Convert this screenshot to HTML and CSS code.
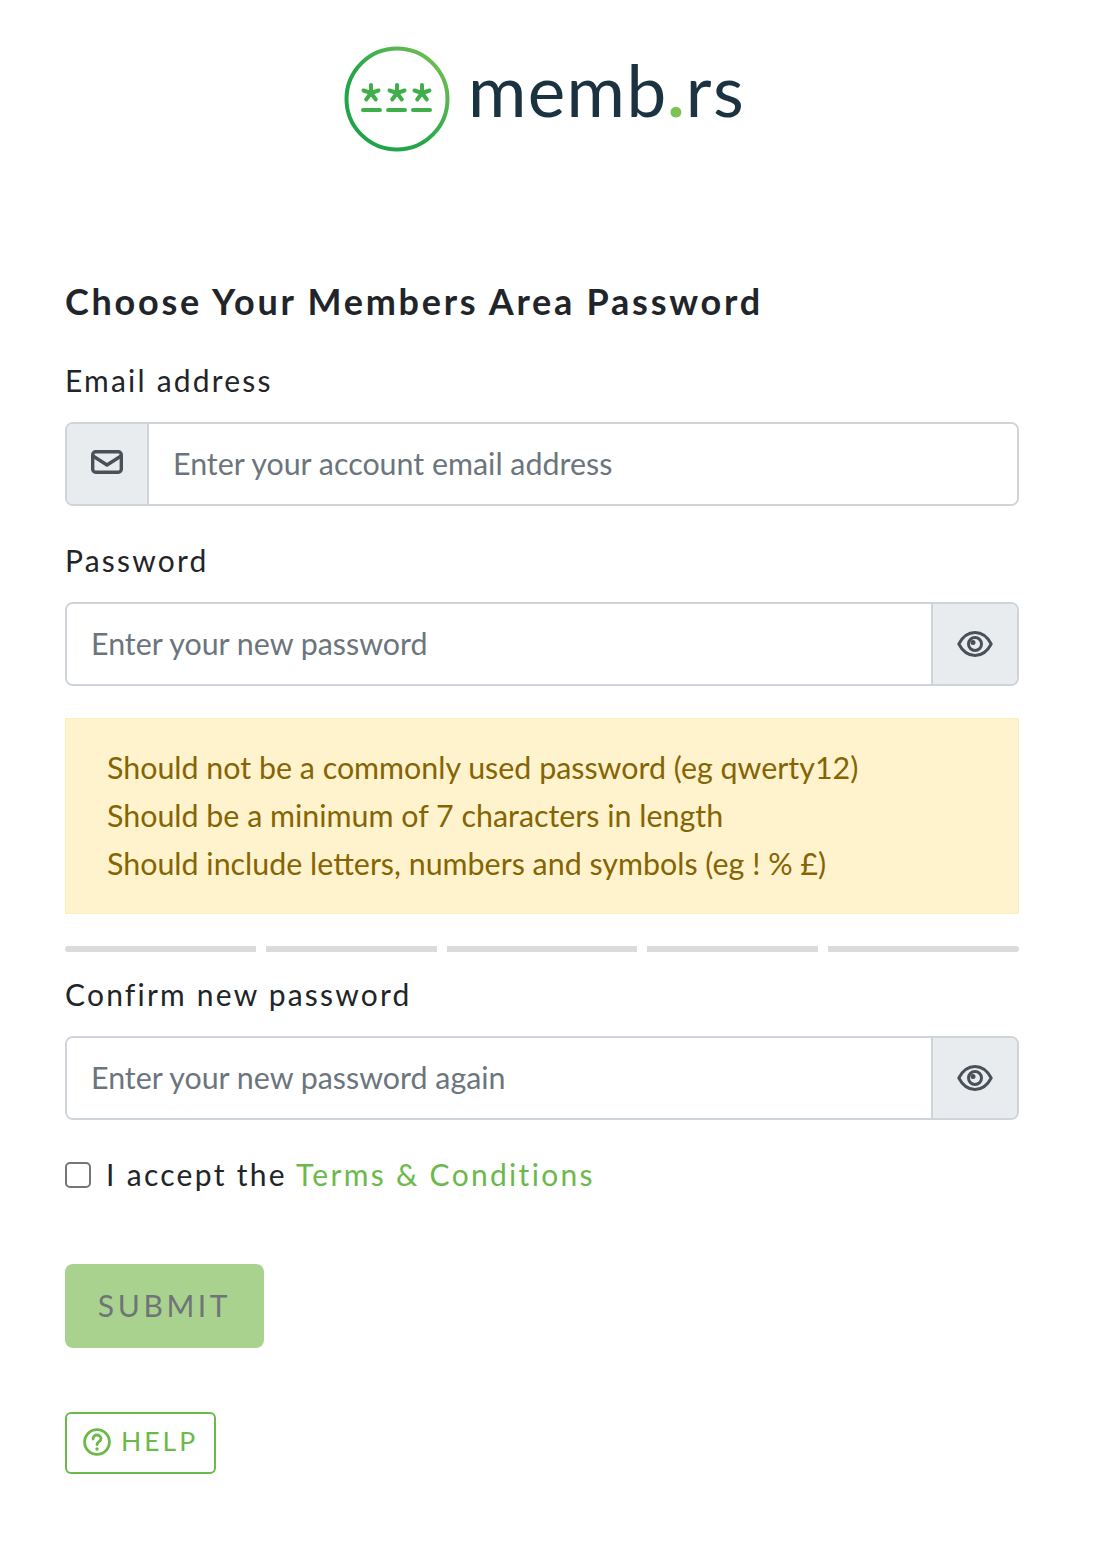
FILE: index.html
```html
<!DOCTYPE html>
<html lang="en">
<head>
  <meta charset="UTF-8">
  <title>memb.rs - Choose Your Members Area Password</title>
  <link rel="stylesheet" href="styles.css">
</head>
<body>
  <main class="page">
    <div class="logo">
      <svg class="logo-mark" viewBox="0 0 106 106" width="106" height="106">
        <defs>
          <linearGradient id="ring" x1="1" y1="0" x2="0" y2="1">
            <stop offset="0" stop-color="#7cc254"/>
            <stop offset="0.6" stop-color="#24a64a"/>
            <stop offset="1" stop-color="#1ba34a"/>
          </linearGradient>
        </defs>
        <circle cx="53" cy="53" r="50.500" fill="none" stroke="url(#ring)" stroke-width="4"/>
        <g stroke="#3fae4b" stroke-width="4" stroke-linecap="round">
          <path d="M27 47v-8M27 47l7.500-2.500M27 47l-7.500-2.500M27 47l4.800 6.500M27 47l-4.800 6.500"/>
          <path d="M53 47v-8M53 47l7.500-2.500M53 47l-7.500-2.500M53 47l4.800 6.500M53 47l-4.800 6.500"/>
          <path d="M78 47v-8M78 47l7.500-2.500M78 47l-7.500-2.500M78 47l4.800 6.500M78 47l-4.800 6.500"/>
          <path d="M19 64h17M44 64h17M69 64h17"/>
        </g>
      </svg>
      <span class="logo-text">memb<span class="logo-dot">.</span>rs</span>
    </div>

    <h1>Choose Your Members Area Password</h1>

    <form>
      <label class="field-label" for="email">Email address</label>
      <div class="input-group">
        <span class="addon addon-left">
          <svg viewBox="0 0 32 24" width="32" height="24" fill="none" stroke="#495057" stroke-width="3.400" stroke-linejoin="round" stroke-linecap="round">
            <rect x="1.700" y="1.700" width="28.600" height="20.600" rx="3"/>
            <path d="M2 6l14 9 14-9"/>
          </svg>
        </span>
        <input type="email" id="email" placeholder="Enter your account email address">
      </div>

      <label class="field-label" for="password">Password</label>
      <div class="input-group">
        <input type="password" id="password" placeholder="Enter your new password">
        <span class="addon addon-right">
          <svg class="eye" viewBox="0 0 36 28" width="36" height="28" fill="none" stroke="#495057" stroke-width="3">
            <path d="M1.800 14C6 6 11.500 2.500 18 2.500S30 6 34.200 14C30 22 24.500 25.500 18 25.500S6 22 1.800 14z" stroke-linejoin="round"/>
            <circle cx="18" cy="14" r="6.500"/>
            <circle cx="16" cy="12.500" r="2.500" fill="#495057" stroke="none"/>
          </svg>
        </span>
      </div>

      <div class="alert">
        <div>Should not be a commonly used password (eg qwerty12)</div>
        <div>Should be a minimum of 7 characters in length</div>
        <div>Should include letters, numbers and symbols (eg ! % £)</div>
      </div>

      <div class="strength">
        <span class="bar first"></span>
        <span class="bar"></span>
        <span class="bar wide"></span>
        <span class="bar"></span>
        <span class="bar last"></span>
      </div>

      <label class="field-label" for="confirm">Confirm new password</label>
      <div class="input-group">
        <input type="password" id="confirm" placeholder="Enter your new password again">
        <span class="addon addon-right">
          <svg class="eye" viewBox="0 0 36 28" width="36" height="28" fill="none" stroke="#495057" stroke-width="3">
            <path d="M1.800 14C6 6 11.500 2.500 18 2.500S30 6 34.200 14C30 22 24.500 25.500 18 25.500S6 22 1.800 14z" stroke-linejoin="round"/>
            <circle cx="18" cy="14" r="6.500"/>
            <circle cx="16" cy="12.500" r="2.500" fill="#495057" stroke="none"/>
          </svg>
        </span>
      </div>

      <div class="check-row">
        <span class="check-box"></span>
        <span class="check-label">I accept the <a href="#">Terms &amp; Conditions</a></span>
      </div>

      <button type="button" class="submit" disabled>Submit</button>

      <a href="#" class="help">
        <svg viewBox="0 0 28 28" width="28" height="28" fill="none" stroke="#6cb94b" stroke-width="2.800" stroke-linecap="round">
          <circle cx="14" cy="14" r="12.400"/>
          <path d="M10 11c0-2.500 1.800-4 4-4s4 1.500 4 3.700c0 3-4 3-4 6"/>
          <circle cx="14" cy="21" r="1.700" fill="#6cb94b" stroke="none"/>
        </svg>
        <span class="help-text">Help</span>
      </a>
    </form>
  </main>
</body>
</html>
```

FILE: styles.css
```css
:root {
  --green: #6cb94b;
  --border: #ced4da;
  --addon: #e9ecef;
  --text: #212529;
}

* {
  box-sizing: border-box;
}

body {
  margin: 0;
  background: #fff;
  color: var(--text);
  font-family: "Lato", "Open Sans", sans-serif;
}

.page {
  width: 1096px;
  height: 1568px;
  padding: 45px 77px 0 65px;
}

.logo {
  display: flex;
  justify-content: center;
  align-items: center;
  gap: 18px;
  height: 106px;
  padding-left: 5px;
}

.logo-mark {
  margin-top: 2px;
}

.logo-text {
  font-size: 71px;
  line-height: 1;
  letter-spacing: 1.4px;
  color: #1b3340;
  position: relative;
  top: -9px;
}

.logo-dot {
  color: #7cc254;
  font-weight: 700;
}

h1 {
  margin: 126px 0 0;
  font-size: 36px;
  line-height: 48px;
  font-weight: 700;
  letter-spacing: 2.75px;
}

form {
  padding-top: 31px;
}

.field-label {
  display: block;
  font-size: 30px;
  line-height: 48px;
  letter-spacing: 2.2px;
  margin-bottom: 18px;
}

.input-group {
  display: flex;
  height: 84px;
  border: 2px solid var(--border);
  border-radius: 8px;
  margin-bottom: 30px;
  overflow: hidden;
}

.input-group input {
  flex: 1;
  min-width: 0;
  border: 0;
  outline: 0;
  padding: 0 24px 2px;
  font-family: inherit;
  font-size: 30.4px;
  color: #495057;
}

.input-group input::placeholder {
  color: #6c757d;
  opacity: 1;
}

.addon {
  display: flex;
  align-items: center;
  justify-content: center;
  background: var(--addon);
}

.addon-left {
  width: 82px;
  border-right: 2px solid var(--border);
}

.addon-left svg {
  margin-bottom: 4px;
}

.addon-right {
  width: 86px;
  border-left: 2px solid var(--border);
}

.alert {
  height: 196px;
  margin-top: 32px;
  padding: 24px 41px;
  background: #fff3cd;
  border: 1px solid #ffeeba;
  color: #856404;
  font-size: 30.4px;
  line-height: 48px;
}

.strength {
  display: flex;
  gap: 10px;
  height: 6px;
  margin-top: 32px;
  margin-bottom: 18px;
}

.bar {
  flex: 171 0 0;
  background: #dbdbdb;
}

.bar.first, .bar.last, .bar.wide {
  flex-grow: 191;
}

.bar.first {
  border-radius: 3px 0 0 3px;
}

.bar.last {
  border-radius: 0 3px 3px 0;
}

.check-row {
  display: flex;
  align-items: center;
  gap: 15px;
  height: 48px;
  margin-top: 31px;
}

.check-box {
  width: 26px;
  height: 26px;
  border: 2px solid #767676;
  border-radius: 5px;
}

.check-label {
  font-size: 30px;
  letter-spacing: 2.3px;
  padding-bottom: 2px;
}

.check-label a {
  color: var(--green);
  text-decoration: none;
}

.submit {
  display: block;
  width: 199px;
  height: 84px;
  margin-top: 65px;
  padding-bottom: 3px;
  border: 0;
  border-radius: 8px;
  background: #a9d28f;
  color: #6f7478;
  font-family: inherit;
  font-size: 30px;
  letter-spacing: 3.6px;
  text-transform: uppercase;
}

.help {
  display: inline-flex;
  align-items: center;
  gap: 10px;
  width: 151px;
  height: 62px;
  margin-top: 64px;
  padding-left: 16px;
  border: 2px solid var(--green);
  border-radius: 6px;
  color: var(--green);
  font-size: 26.5px;
  letter-spacing: 3px;
  text-transform: uppercase;
  text-decoration: none;
}

.help svg {
  margin-bottom: 2px;
}

.help-text {
  margin-bottom: 5px;
}
```
